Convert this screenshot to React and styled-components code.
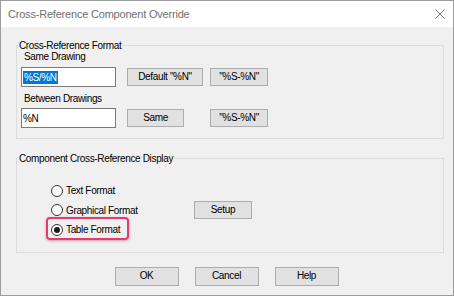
import styled, { createGlobalStyle } from "styled-components";

const GlobalStyle = createGlobalStyle`
  html, body {
    margin: 0;
    padding: 0;
    background: #f0f0f0;
  }
  * {
    box-sizing: border-box;
  }
`;

const Window = styled.div`
  width: 454px;
  height: 296px;
  border: 1px solid #9c9c9c;
  background: #f0f0f0;
  display: flex;
  flex-direction: column;
  font-family: "Liberation Sans", Arial, sans-serif;
  font-size: 10px;
  letter-spacing: -0.35px;
  color: #000;
`;

const TitleBar = styled.div`
  height: 26px;
  background: #fff;
  display: flex;
  align-items: center;
  justify-content: space-between;
  padding: 0 8px 0 7px;
`;

const Title = styled.span`
  font-size: 11px;
  letter-spacing: -0.2px;
  color: #707070;
`;

const Body = styled.div`
  flex: 1;
  display: flex;
  flex-direction: column;
  padding: 18px 9px 0 15px;
`;

const Group = styled.div`
  width: 428px;
  border: 1px solid #dcdcdc;
  padding: 0 0 ${(p) => p.$bottom}px 0;
  margin-bottom: ${(p) => p.$gap}px;
`;

const Caption = styled.div`
  width: fit-content;
  margin: -6px 0 -1px 1px;
  padding: 0 1px;
  line-height: 12px;
  background: #f0f0f0;
`;

const Fields = styled.div`
  padding-left: 4px;
`;

const Label = styled.div`
  line-height: 12px;
  padding-left: 3px;
  margin-top: ${(p) => p.$top}px;
  margin-bottom: ${(p) => p.$bottom}px;
`;

const Row = styled.div`
  display: grid;
  grid-template-columns: 106px 83px 58px;
  align-items: center;
`;

const TextBox = styled.div`
  width: 95px;
  height: 20px;
  background: #fff;
  border: 1px solid #7a7a7a;
  display: flex;
  align-items: center;
  padding-left: 1px;
  line-height: 13px;
`;

const Selected = styled.span`
  background: #0078d7;
  color: #fff;
  padding: 0 1px;
`;

const Button = styled.div`
  width: ${(p) => p.$w}px;
  height: ${(p) => p.$h || 18}px;
  background: #e1e1e1;
  border: 1px solid #adadad;
  display: flex;
  align-items: center;
  justify-content: center;
  line-height: 12px;
  white-space: nowrap;
`;

const DisplayRow = styled.div`
  display: flex;
  align-items: center;
  margin-top: 17px;
  padding-left: 34px;
`;

const RadioList = styled.div`
  width: 143px;
  display: flex;
  flex-direction: column;
`;

const RadioItem = styled.div`
  position: relative;
  width: fit-content;
  height: 19.5px;
  display: flex;
  align-items: center;
  gap: 3px;

  ${(p) =>
    p.$highlight &&
    `
    &::after {
      content: "";
      position: absolute;
      left: -5px;
      right: -9px;
      top: -3px;
      bottom: 0;
      border: 2px solid #e8386c;
      border-radius: 4px;
      box-shadow: 0 1px 3px rgba(120, 0, 40, 0.35);
    }
  `}
`;

const Circle = styled.span`
  width: 12px;
  height: 12px;
  border-radius: 50%;
  border: 1px solid #333;
  background: #fff;
  display: flex;
  align-items: center;
  justify-content: center;

  &::before {
    content: "";
    display: ${(p) => (p.$checked ? "block" : "none")};
    width: 6px;
    height: 6px;
    border-radius: 50%;
    background: #1a1a1a;
  }
`;

const Footer = styled.div`
  display: flex;
  justify-content: center;
  gap: 16px;
  margin-top: 14px;
  padding-right: 7px;
`;

const Radio = ({ label, checked, highlight }) => (
  <RadioItem $highlight={highlight}>
    <Circle $checked={checked} />
    <span>{label}</span>
  </RadioItem>
);

const CloseIcon = () => (
  <svg width="10" height="10" viewBox="0 0 10 10">
    <path d="M0.5 0.5 L9.5 9.5 M9.5 0.5 L0.5 9.5" stroke="#7a7a7a" strokeWidth="1" fill="none" />
  </svg>
);

const App = () => {
  return (
    <>
      <GlobalStyle />
      <Window>
        <TitleBar>
          <Title>Cross-Reference Component Override</Title>
          <CloseIcon />
        </TitleBar>
        <Body>
          <Group $bottom={10} $gap={19}>
            <Caption>Cross-Reference Format</Caption>
            <Fields>
              <Label $top={0} $bottom={4}>Same Drawing</Label>
              <Row>
                <TextBox>
                  <Selected>%S/%N</Selected>
                </TextBox>
                <Button $w={76}>Default "%N"</Button>
                <Button $w={58}>"%S-%N"</Button>
              </Row>
              <Label $top={6} $bottom={3}>Between Drawings</Label>
              <Row>
                <TextBox>
                  <span>%N</span>
                </TextBox>
                <Button $w={57}>Same</Button>
                <Button $w={58}>"%S-%N"</Button>
              </Row>
            </Fields>
          </Group>
          <Group $bottom={12} $gap={0}>
            <Caption>Component Cross-Reference Display</Caption>
            <DisplayRow>
              <RadioList>
                <Radio label="Text Format" />
                <Radio label="Graphical Format" />
                <Radio label="Table Format" checked highlight />
              </RadioList>
              <Button $w={58}>Setup</Button>
            </DisplayRow>
          </Group>
          <Footer>
            <Button $w={64} $h={19}>OK</Button>
            <Button $w={64} $h={19}>Cancel</Button>
            <Button $w={64} $h={19}>Help</Button>
          </Footer>
        </Body>
      </Window>
    </>
  );
};

export default App;
